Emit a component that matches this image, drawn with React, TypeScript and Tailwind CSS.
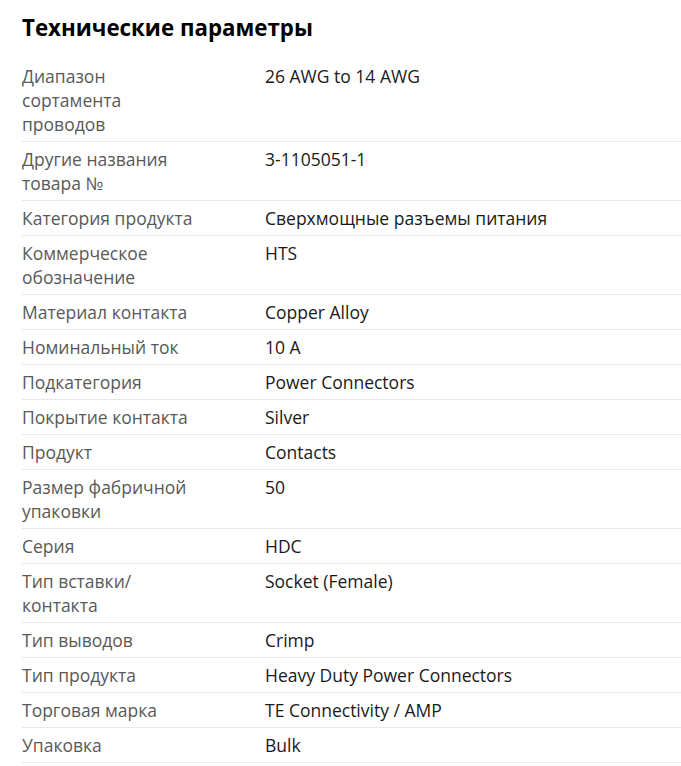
const specs: [string, string][] = [
  ["Диапазон сортамента проводов", "26 AWG to 14 AWG"],
  ["Другие названия товара №", "3-1105051-1"],
  ["Категория продукта", "Сверхмощные разъемы питания"],
  ["Коммерческое обозначение", "HTS"],
  ["Материал контакта", "Copper Alloy"],
  ["Номинальный ток", "10 A"],
  ["Подкатегория", "Power Connectors"],
  ["Покрытие контакта", "Silver"],
  ["Продукт", "Contacts"],
  ["Размер фабричной упаковки", "50"],
  ["Серия", "HDC"],
  ["Тип вставки/ контакта", "Socket (Female)"],
  ["Тип выводов", "Crimp"],
  ["Тип продукта", "Heavy Duty Power Connectors"],
  ["Торговая марка", "TE Connectivity / AMP"],
  ["Упаковка", "Bulk"],
];

export default function App() {
  return (
    <div className="min-h-screen bg-white pl-[22px] font-['Open_Sans',sans-serif]">
      <h2 className="pt-[13px] pb-[16px] text-[22.3px] leading-[30px] font-bold text-black">
        Технические параметры
      </h2>
      <div>
        {specs.map(([label, value]) => (
          <div
            key={label}
            className="grid grid-cols-[176px_1fr] gap-x-[67px] border-b border-[#e8e8e8] py-[5px] text-[17.5px] leading-6"
          >
            <div className="text-[#595959]">{label}</div>
            <div className="text-[#1a1a1a]">{value}</div>
          </div>
        ))}
      </div>
    </div>
  );
}
